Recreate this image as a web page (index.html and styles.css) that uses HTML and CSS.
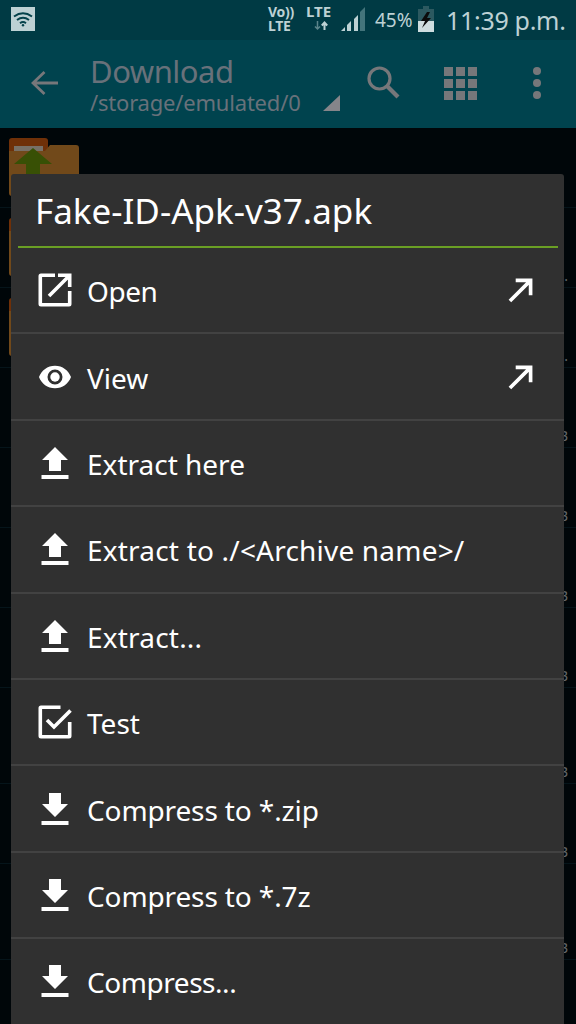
FILE: index.html
```html
<!DOCTYPE html>
<html lang="en">
<head>
  <meta charset="UTF-8" />
  <meta name="viewport" content="width=device-width, initial-scale=1.0"/>
  <title>Download</title>
  <link rel="stylesheet" href="styles.css">
</head>
<body>
  <svg class="sprite" aria-hidden="true">
    <symbol id="extract" viewBox="0 0 34 34"><path d="M17 1L4 14h7v11h12V14h7zM3.500 29h27v4h-27z"/></symbol>
    <symbol id="compress" viewBox="0 0 34 34"><path d="M11 1h12v11h7L17 25 4 12h7zM3.500 29h27v4h-27z"/></symbol>
    <symbol id="launch" viewBox="0 0 26 26"><path d="M2 24L23 3M8 2.500h15.500V18" fill="none" stroke="#fff" stroke-width="3.800"/></symbol>
    <symbol id="folder" viewBox="0 0 70 60"><path d="M0 3q0-3 3-3h33q3 0 3 3v12H0z" fill="#6f3008"/><path d="M5 8h29v5H5z" fill="#777067"/><path d="M0 13h36l5-6h26q3 0 3 3v45q0 3-3 3H3q-3 0-3-3z" fill="#71491a"/></symbol>
  </svg>

  <div class="status-bar">
    <svg class="wifi" viewBox="0 0 24 24"><path d="M0 0h24v24H0z" fill="#bdd1d4"/><path d="M3 9.500q9-6.500 18 0M6 13q6-4.500 12 0M9 16.200q3-2.200 6 0" fill="none" stroke="#04424b" stroke-width="2"/><circle cx="12" cy="18.200" r="1.200" fill="#04424b"/></svg>
    <div class="volte"><span>Vo))</span><span>LTE</span></div>
    <div class="network">
      <span>LTE</span>
      <svg viewBox="0 0 14 10"><path d="M3.500 0v8M1 5.500L3.500 8 6 5.500" fill="none" stroke="#5b858b" stroke-width="1.500"/><path d="M10.500 9V2M7.800 4.500l2.700-3 2.700 3" fill="none" stroke="#bdd1d4" stroke-width="2"/></svg>
    </div>
    <svg class="signal" viewBox="0 0 26 26"><path d="M1 25l4-4v4zM7 19l4-4v10H7zM14 13l4-4v16h-4z" fill="#bdd1d4"/><path d="M20 6l5-5v24h-5z" fill="#43747b"/></svg>
    <span class="percent">45%</span>
    <svg class="battery" viewBox="0 0 16 26"><path d="M5 0h6v3h5v13H0V3h5z" fill="#2c5960"/><path d="M0 15h16v11H0z" fill="#cfdddf"/><path d="M9 6L3 15h4l-3 7 9-10H9l3-6z" fill="#0b0b0b"/></svg>
    <span class="clock">11:39 p.m.</span>
  </div>

  <div class="toolbar">
    <svg class="back" viewBox="0 0 28 26"><path d="M27 13H2M13.500 2L2 13l11.500 11" fill="none" stroke="#76777a" stroke-width="2.800"/></svg>
    <div class="location">
      <span class="folder-name">Download</span>
      <div class="path"><span>/storage/emulated/0</span><svg viewBox="0 0 17 16"><path d="M17 0v16H0z" fill="#85858a"/></svg></div>
    </div>
    <svg class="search" viewBox="0 0 33 33"><g fill="none" stroke="#76777a"><circle cx="12.500" cy="12.500" r="10.500" stroke-width="3.200"/><path d="M20 20l11 11" stroke-width="4.200"/></g></svg>
    <div class="grid-icon"><i></i><i></i><i></i><i></i><i></i><i></i><i></i><i></i><i></i></div>
    <div class="more"><i></i><i></i><i></i></div>
  </div>

  <div class="file-list">
    <div class="file-row">
      <svg class="folder"><use href="#folder"/><path d="M24 10l19 16H31v15H17V26H5z" fill="#385005"/></svg>
    </div>
    <div class="file-row"><svg class="folder"><use href="#folder"/></svg><span>.</span></div>
    <div class="file-row"><svg class="folder"><use href="#folder"/></svg><span>.</span></div>
    <div class="file-row"><span>B</span></div>
    <div class="file-row"><span>B</span></div>
    <div class="file-row"><span>B</span></div>
    <div class="file-row"><span>B</span></div>
    <div class="file-row tall"><span>B</span></div>
    <div class="file-row"><span>B</span></div>
    <div class="file-row tall"><span>B</span></div>
  </div>

  <div class="dialog">
    <h1>Fake-ID-Apk-v37.apk</h1>
    <ul class="menu">
      <li>
        <svg class="icon" viewBox="0 0 34 34"><g fill="none" stroke="#fff" stroke-width="3.600"><path d="M17 2.300H3q-.7 0-.7.700v28q0 .7.700.7h28q.7 0 .7-.7V18M20 2.300h11.700V14M30 4L11 23"/></g></svg>
        <span class="tight">Open</span>
        <svg class="launch"><use href="#launch"/></svg>
      </li>
      <li>
        <svg class="icon" viewBox="0 0 34 34"><path fill-rule="evenodd" d="M17 5.700C9.500 5.700 3.500 10.300 1 17c2.500 6.700 8.500 11.300 16 11.300S30.500 23.700 33 17C30.500 10.300 24.500 5.700 17 5.700zM17 24.500a7.500 7.500 0 1 1 0-15 7.500 7.500 0 0 1 0 15z"/><circle cx="17" cy="17" r="4.700"/></svg>
        <span>View</span>
        <svg class="launch"><use href="#launch"/></svg>
      </li>
      <li><svg class="icon"><use href="#extract"/></svg><span>Extract here</span></li>
      <li><svg class="icon"><use href="#extract"/></svg><span class="loose">Extract to ./&lt;Archive name&gt;/</span></li>
      <li><svg class="icon"><use href="#extract"/></svg><span class="loose">Extract...</span></li>
      <li>
        <svg class="icon" viewBox="0 0 34 34"><g fill="none" stroke="#fff" stroke-width="3.600"><path d="M22.500 2.300H3q-.7 0-.7.700v28q0 .7.700.7h28q.7 0 .7-.7V17"/><path d="M9 15l7 7L32.500 5.500"/></g></svg>
        <span>Test</span>
      </li>
      <li><svg class="icon"><use href="#compress"/></svg><span class="snug">Compress to *.zip</span></li>
      <li><svg class="icon"><use href="#compress"/></svg><span class="snug">Compress to *.7z</span></li>
      <li><svg class="icon"><use href="#compress"/></svg><span class="tight">Compress...</span></li>
    </ul>
  </div>
</body>
</html>
```

FILE: styles.css
```css
* {
  box-sizing: border-box;
}

body {
  margin: 0;
  height: 1024px;
  overflow: hidden;
  position: relative;
  background: #000609;
  font-family: "Noto Sans", sans-serif;
  color: #fff;
}

svg {
  display: block;
  flex: none;
}

span {
  white-space: nowrap;
}

.sprite {
  display: none;
}

.status-bar {
  height: 40px;
  display: flex;
  align-items: flex-start;
  background: #003a44;
  color: #bdd1d4;
}

.wifi {
  width: 24px;
  height: 24px;
  margin: 7px 0 0 11px;
}

.volte,
.network {
  display: flex;
  flex-direction: column;
  font-size: 14px;
  font-weight: 700;
  line-height: 14px;
}

.volte {
  width: 38px;
  margin: 5px 0 0 233px;
  letter-spacing: -0.3px;
}

.network {
  width: 34px;
  padding-top: 4px;
  font-size: 15px;
}

.network svg {
  width: 14px;
  height: 10px;
  margin: 3px 0 0 8px;
}

.signal {
  width: 26px;
  height: 26px;
  margin-top: 6px;
}

.percent {
  width: 43px;
  margin: 6px 0 0 9px;
  font-size: 19px;
  line-height: 28px;
}

.battery {
  width: 16px;
  height: 26px;
  margin-top: 6px;
}

.clock {
  margin: 3px 0 0 12px;
  font-size: 25px;
  line-height: 34px;
  letter-spacing: -0.3px;
}

.toolbar {
  height: 88px;
  display: flex;
  background: #00434e;
  color: #68717a;
}

.back {
  width: 28px;
  height: 26px;
  margin: 30px 0 0 31px;
}

.location {
  width: 276px;
  padding: 12px 0 0 31px;
}

.folder-name {
  display: block;
  font-size: 31px;
  line-height: 38px;
  letter-spacing: -0.5px;
}

.path {
  display: flex;
  font-size: 22px;
  line-height: 25px;
  letter-spacing: -0.2px;
}

.path span {
  width: 233px;
  flex: none;
}

.path svg {
  width: 17px;
  height: 16px;
  margin-top: 5px;
}

.location,
.search {
  flex: none;
}

.search {
  width: 33px;
  height: 33px;
  margin: 26px 0 0 32px;
}

.grid-icon {
  height: 33px;
  display: grid;
  grid-template-columns: repeat(3, 9px);
  grid-template-rows: repeat(3, 9px);
  gap: 3px;
  margin: 27px 0 0 44px;
}

.grid-icon i,
.more i {
  background: #76777a;
}

.more {
  display: grid;
  grid-template-rows: repeat(3, 8px);
  gap: 4px;
  height: 32px;
  margin: 27px 0 0 56px;
}

.more i {
  width: 8px;
  border-radius: 50%;
}

.file-row {
  height: 80px;
  display: flex;
  justify-content: flex-end;
  align-items: flex-end;
  padding: 0 8px 0 9px;
  border-bottom: 1px solid #05141a;
  color: #62676a;
  font-size: 14px;
  line-height: 22px;
}

.file-row.tall {
  height: 96px;
}

.folder {
  width: 70px;
  height: 60px;
  margin: 0 auto 9px 0;
}

/* action sheet opened over the list */
.dialog {
  position: absolute;
  top: 174px;
  left: 11px;
  width: 553px;
  height: 850px;
  background: #303030;
  border-radius: 3px 3px 0 0;
  overflow: hidden;
}

.dialog h1 {
  height: 74px;
  margin: 0 6px 0 7px;
  padding-left: 17px;
  border-bottom: 2px solid #6a9f24;
  font-size: 35px;
  font-weight: 400;
  line-height: 74px;
}

.menu {
  margin: 0;
  padding: 0;
  list-style: none;
}

.menu li {
  height: 86.4px;
  display: flex;
  align-items: center;
  padding: 0 31px 0 27px;
  border-bottom: 2px solid #424242;
  font-size: 28px;
}

.menu span {
  padding-top: 2px;
}

.tight {
  letter-spacing: -0.45px;
}

.snug {
  letter-spacing: -0.12px;
}

.loose {
  letter-spacing: 0.2px;
}

.icon {
  width: 34px;
  height: 34px;
  margin-right: 15px;
  fill: #fff;
}

.launch {
  width: 25px;
  height: 25px;
  margin: 1px 0 0 auto;
}
```
